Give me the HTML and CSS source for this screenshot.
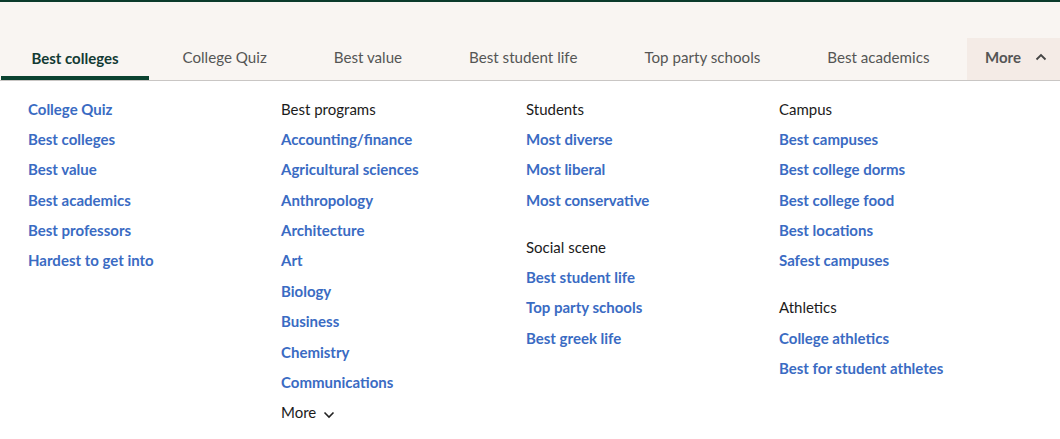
FILE: index.html
```html
<!DOCTYPE html>
<html>
<head>
<meta charset="utf-8">
<link rel="stylesheet" href="styles.css">
</head>
<body>
<header class="topbar">
  <nav class="tabs">
    <a class="tab active">Best colleges</a>
    <a class="tab">College Quiz</a>
    <a class="tab">Best value</a>
    <a class="tab">Best student life</a>
    <a class="tab">Top party schools</a>
    <a class="tab">Best academics</a>
    <a class="tab more">More
      <svg class="chev" width="12" height="8" viewBox="0 0 12 8"><path d="M1.5 6.5 L6 2 L10.5 6.5" fill="none" stroke="#444" stroke-width="1.8"/></svg>
    </a>
  </nav>
</header>
<section class="menu">
  <div class="col">
    <ul class="group">
      <li><a>College Quiz</a></li>
      <li><a>Best colleges</a></li>
      <li><a>Best value</a></li>
      <li><a>Best academics</a></li>
      <li><a>Best professors</a></li>
      <li><a>Hardest to get into</a></li>
    </ul>
  </div>
  <div class="col">
    <ul class="group">
      <li class="head">Best programs</li>
      <li><a>Accounting/finance</a></li>
      <li><a>Agricultural sciences</a></li>
      <li><a>Anthropology</a></li>
      <li><a>Architecture</a></li>
      <li><a>Art</a></li>
      <li><a>Biology</a></li>
      <li><a>Business</a></li>
      <li><a>Chemistry</a></li>
      <li><a>Communications</a></li>
      <li class="head">More <svg class="chev" width="12" height="8" viewBox="0 0 12 8"><path d="M1.5 1.5 L6 6 L10.5 1.5" fill="none" stroke="#222" stroke-width="1.6"/></svg></li>
    </ul>
  </div>
  <div class="col">
    <ul class="group">
      <li class="head">Students</li>
      <li><a>Most diverse</a></li>
      <li><a>Most liberal</a></li>
      <li><a>Most conservative</a></li>
    </ul>
    <ul class="group">
      <li class="head">Social scene</li>
      <li><a>Best student life</a></li>
      <li><a>Top party schools</a></li>
      <li><a>Best greek life</a></li>
    </ul>
  </div>
  <div class="col">
    <ul class="group">
      <li class="head">Campus</li>
      <li><a>Best campuses</a></li>
      <li><a>Best college dorms</a></li>
      <li><a>Best college food</a></li>
      <li><a>Best locations</a></li>
      <li><a>Safest campuses</a></li>
    </ul>
    <ul class="group">
      <li class="head">Athletics</li>
      <li><a>College athletics</a></li>
      <li><a>Best for student athletes</a></li>
    </ul>
  </div>
</section>
</body>
</html>
```
FILE: styles.css
```css
* { box-sizing: border-box; }
body {
  margin: 0;
  background: #fff;
  font-family: "Lato", "Liberation Sans", sans-serif;
  font-size: 15px;
}
.topbar {
  border-top: 2px solid #0b3a2c;
  background: #f9f5f2;
  padding-top: 36px;
}
.tabs {
  display: flex;
  border-bottom: 1px solid #c9c6c4;
  height: 43px;
}
.tab {
  flex-shrink: 0;
  display: flex;
  align-items: center;
  justify-content: center;
  padding: 0 33.5px 5px;
  color: #555;
  font-size: 15.15px;
  white-space: nowrap;
}
.tab.active {
  width: 148px;
  margin-left: 1px;
  padding: 2px 0 1px;
  color: #123a33;
  font-weight: 700;
  font-size: 15px;
  border-bottom: 4px solid #0b4230;
}
.tab.more {
  flex-shrink: 1;
  margin-left: auto;
  width: 93px;
  padding: 0 0 5px 18px;
  justify-content: flex-start;
  background: #f4ebe6;
  font-weight: 700;
  font-size: 15px;
  color: #555;
}
.tab.more .chev { margin-left: 14px; }
.menu {
  display: grid;
  grid-template-columns: 253px 245px 253px 1fr;
  padding: 17.5px 0 0 28px;
}
.group {
  list-style: none;
  margin: 0;
  padding: 0;
}
.group + .group { margin-top: 16.6px; }
.group li {
  line-height: 20px;
  height: 30.4px;
  white-space: nowrap;
}
.group a {
  color: #3a6bc3;
  font-weight: 700;
}
.head { color: #1b1b1b; }
.head .chev { margin-left: 3px; vertical-align: middle; }
```
